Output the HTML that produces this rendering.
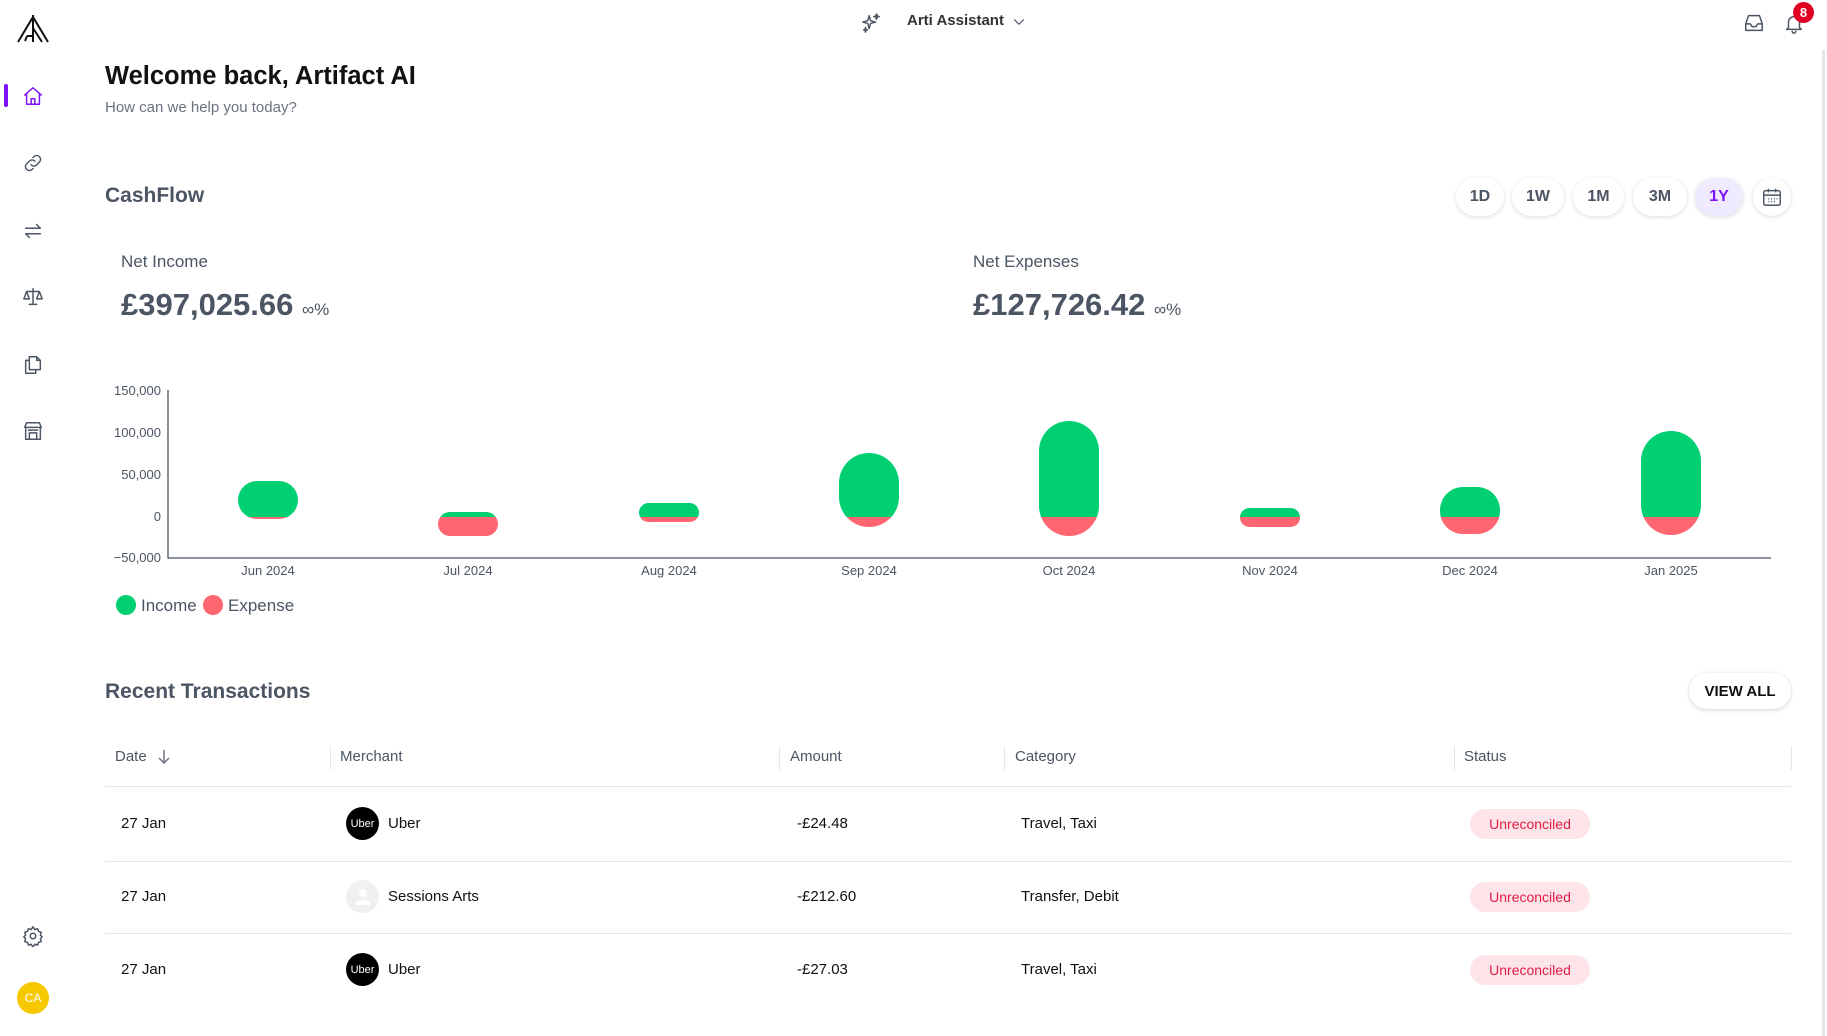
<!DOCTYPE html>
<html><head><meta charset="utf-8"><style>
*{margin:0;padding:0;box-sizing:border-box}
body{width:1827px;height:1036px;overflow:hidden;background:#fff;font-family:"Liberation Sans",sans-serif;position:relative;color:#111}
.a{position:absolute;white-space:nowrap}
.ic{position:absolute;width:22px;height:22px;fill:none;stroke:#4b5563;stroke-width:1.6;stroke-linecap:round;stroke-linejoin:round}
.btn{position:absolute;top:178px;height:38px;border-radius:19px;background:#fff;box-shadow:0 1px 4px rgba(0,0,0,.15);font-weight:bold;font-size:16px;color:#4b5563;display:flex;align-items:center;justify-content:center}
.th{position:absolute;top:748px;font-size:15px;color:#4b5563}
.sep{position:absolute;top:746px;width:1px;height:24px;background:#e5e7eb}
.hl{position:absolute;left:105px;width:1686px;height:1px;background:#e5e7eb}
.td{position:absolute;font-size:15px;color:#111}
.pill{position:absolute;left:1470px;width:120px;height:30px;border-radius:15px;background:#fde4e8;color:#e11d48;font-size:14px;display:flex;align-items:center;justify-content:center}
.av{position:absolute;left:346px;width:33px;height:33px;border-radius:50%;background:#000;color:#fff;font-size:11px;display:flex;align-items:center;justify-content:center}
</style></head><body>
<svg class="a" style="left:16px;top:14px" width="34" height="30" viewBox="0 0 34 30" fill="none" stroke="#111" stroke-width="2"><path d="M2 28L17 3L32 28M17 1V28M11 22H17M17 14L26 28M11 22L9 27"/></svg>
<div class="a" style="left:4px;top:84px;width:4px;height:23px;background:#7c12f5;border-radius:2px"></div>
<svg class="ic" style="left:22px;top:85px;stroke:#7c12f5" viewBox="0 0 24 24"><path d="M3 11L12 3L21 11M5 9V21H19V9M10 21V15H14V21"/></svg>
<svg class="ic" style="left:22px;top:152px" viewBox="0 0 24 24"><path d="M10 14a4 4 0 0 0 6 0l3-3a4 4 0 0 0-6-6l-1 1M14 10a4 4 0 0 0-6 0l-3 3a4 4 0 0 0 6 6l1-1"/></svg>
<svg class="ic" style="left:22px;top:220px" viewBox="0 0 24 24"><path d="M4 9H20L16 5M20 15H4L8 19"/></svg>
<svg class="ic" style="left:22px;top:286px" viewBox="0 0 24 24"><path d="M12 3V20M5 6H19M8 20H16M5 6L2 14H8L5 6M19 6L16 14H22L19 6"/></svg>
<svg class="ic" style="left:22px;top:354px" viewBox="0 0 24 24"><path d="M8 7V3H16L20 7V17H8V7M16 3V7H20M8 7H4V21H15V17"/></svg>
<svg class="ic" style="left:22px;top:420px" viewBox="0 0 24 24"><path d="M3 8L5 3H19L21 8H3M4 8V21H20V8M8 21V14H16V21M7 11H17"/></svg>
<svg class="ic" style="left:22px;top:925px" viewBox="0 0 24 24"><circle cx="12" cy="12" r="3"/><path d="M12 2l2 3 3-1 1 3 3 1-1 3 2 2-2 2 1 3-3 1-1 3-3-1-2 3-2-3-3 1-1-3-3-1 1-3-2-2 2-2-1-3 3-1 1-3 3 1z"/></svg>
<div class="a" style="left:17px;top:982px;width:32px;height:32px;border-radius:50%;background:#f5c800;color:#fff;font-size:12px;display:flex;align-items:center;justify-content:center">CA</div>
<div class="a" style="left:1822px;top:50px;width:3px;height:986px;background:#e5e7eb"></div>
<svg class="ic" style="left:860px;top:12px" viewBox="0 0 24 24"><path d="M10 4L11.5 9.5 17 11 11.5 12.5 10 18 8.5 12.5 3 11 8.5 9.5Z M18 2L18.7 4.3 21 5 18.7 5.7 18 8 17.3 5.7 15 5 17.3 4.3Z M6 17L6.5 19 8 19.5 6.5 20 6 22 5.5 20 4 19.5 5.5 19Z"/></svg>
<div class="a" style="left:907px;top:12px;font-size:15px;font-weight:bold;color:#333">Arti Assistant</div>
<svg class="ic" style="left:1010px;top:13px;width:18px;height:18px" viewBox="0 0 24 24"><path d="M6 9L12 15L18 9"/></svg>
<svg class="ic" style="left:1743px;top:12px" viewBox="0 0 24 24"><path d="M3 13L6 4H18L21 13V20H3V13H8L10 16H14L16 13H21"/></svg>
<svg class="ic" style="left:1783px;top:12px" viewBox="0 0 24 24"><path d="M6 17V11a6 6 0 0 1 12 0V17L20 19H4L6 17M10 21a2 2 0 0 0 4 0"/></svg>
<div class="a" style="left:1793px;top:2px;width:21px;height:21px;border-radius:50%;background:#e00024;color:#fff;font-size:13px;font-weight:bold;display:flex;align-items:center;justify-content:center">8</div>
<div class="a" style="left:105px;top:62px;font-size:25.5px;font-weight:bold;color:#111">Welcome back, Artifact AI</div>
<div class="a" style="left:105px;top:99px;font-size:15px;color:#6b7280">How can we help you today?</div>
<div class="a" style="left:105px;top:184px;font-size:21px;font-weight:bold;color:#4b5563">CashFlow</div>
<div class="btn" style="left:1456px;width:48px">1D</div>
<div class="btn" style="left:1512px;width:52px">1W</div>
<div class="btn" style="left:1573px;width:51px">1M</div>
<div class="btn" style="left:1633px;width:54px">3M</div>
<div class="btn" style="left:1695px;width:48px;background:#efeafd;color:#7c12f5">1Y</div>
<div class="btn" style="left:1753px;width:38px"><svg width="22" height="22" viewBox="0 0 24 24" fill="none" stroke="#4b5563" stroke-width="1.6"><rect x="3" y="5" width="18" height="16" rx="2"/><path d="M3 10H21M8 3V7M16 3V7M8 14h1M11 14h1M14 14h1M8 17h1M11 17h1M14 17h1M17 14h1"/></svg></div>
<div class="a" style="left:121px;top:252px;font-size:17px;color:#4b5563">Net Income</div>
<div class="a" style="left:121px;top:287px;font-size:31px;font-weight:bold;color:#4b5563">£397,025.66 <span style="font-size:17px;font-weight:normal">∞%</span></div>
<div class="a" style="left:973px;top:252px;font-size:17px;color:#4b5563">Net Expenses</div>
<div class="a" style="left:973px;top:287px;font-size:31px;font-weight:bold;color:#4b5563">£127,726.42 <span style="font-size:17px;font-weight:normal">∞%</span></div>
<svg class="a" style="left:0;top:0" width="1827" height="620" font-family="Liberation Sans" font-size="13" fill="#4b5563">
<defs><clipPath id="up"><rect x="0" y="0" width="1827" height="517"/></clipPath><clipPath id="dn"><rect x="0" y="517" width="1827" height="100"/></clipPath></defs>
<g text-anchor="end"><text x="161" y="395">150,000</text><text x="161" y="437">100,000</text><text x="161" y="479">50,000</text><text x="161" y="521">0</text><text x="161" y="562">−50,000</text></g>
<path d="M168 390V558H1771" stroke="#4b5563" stroke-width="1.3" fill="none"/>
<g text-anchor="middle"><text x="268" y="575">Jun 2024</text><text x="468" y="575">Jul 2024</text><text x="669" y="575">Aug 2024</text><text x="869" y="575">Sep 2024</text><text x="1069" y="575">Oct 2024</text><text x="1270" y="575">Nov 2024</text><text x="1470" y="575">Dec 2024</text><text x="1671" y="575">Jan 2025</text></g>
<g clip-path="url(#up)" fill="#00cf72">
<rect x="238" y="481" width="60" height="38" rx="19"/><rect x="438" y="512" width="60" height="24" rx="12"/><rect x="639" y="503" width="60" height="19" rx="9.5"/><rect x="839" y="453" width="60" height="74" rx="30"/><rect x="1039" y="421" width="60" height="115" rx="30"/><rect x="1240" y="508" width="60" height="19" rx="9.5"/><rect x="1440" y="487" width="60" height="47" rx="23"/><rect x="1641" y="431" width="60" height="104" rx="30"/></g>
<g clip-path="url(#dn)" fill="#ff6672">
<rect x="238" y="481" width="60" height="38" rx="19"/><rect x="438" y="512" width="60" height="24" rx="12"/><rect x="639" y="503" width="60" height="19" rx="9.5"/><rect x="839" y="453" width="60" height="74" rx="30"/><rect x="1039" y="421" width="60" height="115" rx="30"/><rect x="1240" y="508" width="60" height="19" rx="9.5"/><rect x="1440" y="487" width="60" height="47" rx="23"/><rect x="1641" y="431" width="60" height="104" rx="30"/></g>
<circle cx="126" cy="605" r="10" fill="#00cf72"/><text x="141" y="611" font-size="17">Income</text>
<circle cx="213" cy="605" r="10" fill="#ff6672"/><text x="228" y="611" font-size="17">Expense</text>
</svg>
<div class="a" style="left:105px;top:680px;font-size:21px;font-weight:bold;color:#4b5563">Recent Transactions</div>
<div class="a" style="left:1689px;top:673px;width:102px;height:36px;border-radius:18px;box-shadow:0 1px 4px rgba(0,0,0,.18);font-size:15px;font-weight:bold;color:#111;display:flex;align-items:center;justify-content:center">VIEW ALL</div>
<div class="th" style="left:115px">Date</div>
<svg class="a" style="left:157px;top:749px" width="14" height="16" viewBox="0 0 14 16" fill="none" stroke="#6b7280" stroke-width="1.5"><path d="M7 1V14M2 9L7 14L12 9"/></svg>
<div class="sep" style="left:330px"></div><div class="th" style="left:340px">Merchant</div>
<div class="sep" style="left:779px"></div><div class="th" style="left:790px">Amount</div>
<div class="sep" style="left:1004px"></div><div class="th" style="left:1015px">Category</div>
<div class="sep" style="left:1454px"></div><div class="th" style="left:1464px">Status</div>
<div class="sep" style="left:1791px"></div>
<div class="hl" style="top:786px"></div><div class="hl" style="top:861px"></div><div class="hl" style="top:933px"></div>
<div class="td" style="left:121px;top:815px">27 Jan</div>
<div class="av" style="top:807px">Uber</div><div class="td" style="left:388px;top:815px">Uber</div>
<div class="td" style="left:797px;top:815px">-£24.48</div><div class="td" style="left:1021px;top:815px">Travel, Taxi</div>
<div class="pill" style="top:809px">Unreconciled</div>
<div class="td" style="left:121px;top:888px">27 Jan</div>
<div class="av" style="top:880px;background:#f0f0f0"><svg width="20" height="20" viewBox="0 0 20 20" fill="#fff"><circle cx="10" cy="6" r="4"/><path d="M2 18a8 5 0 0 1 16 0z"/></svg></div><div class="td" style="left:388px;top:888px">Sessions Arts</div>
<div class="td" style="left:797px;top:888px">-£212.60</div><div class="td" style="left:1021px;top:888px">Transfer, Debit</div>
<div class="pill" style="top:882px">Unreconciled</div>
<div class="td" style="left:121px;top:961px">27 Jan</div>
<div class="av" style="top:953px">Uber</div><div class="td" style="left:388px;top:961px">Uber</div>
<div class="td" style="left:797px;top:961px">-£27.03</div><div class="td" style="left:1021px;top:961px">Travel, Taxi</div>
<div class="pill" style="top:955px">Unreconciled</div>
</body></html>
